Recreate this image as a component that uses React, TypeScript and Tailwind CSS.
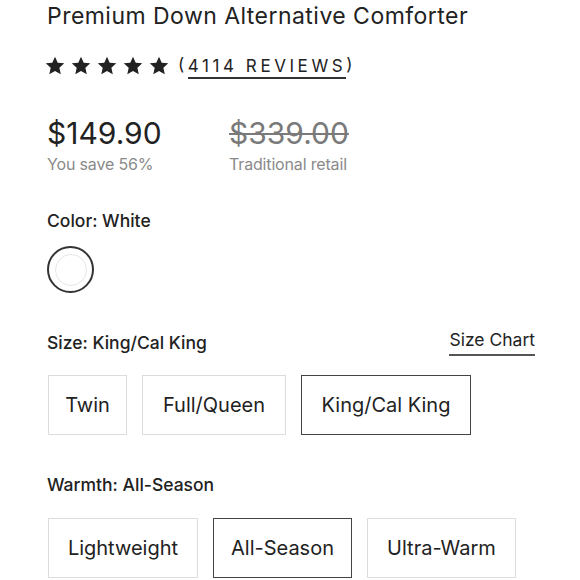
import React from "react";

const Star = () => (
  <svg width="20" height="19" viewBox="0 0 24 23" className="block">
    <path d="M12 0.8l3.3 7.3 7.9 0.8-5.9 5.4 1.7 7.8L12 18.1l-6.9 4 1.7-7.8L0.8 8.9l7.9-0.8z" fill="#222" />
  </svg>
);

const Opt = ({ label, w, selected }: { label: string; w: string; selected?: boolean }) => (
  <div
    className={`h-[60px] ${w} flex items-center justify-center text-[20px] text-[#222] ${
      selected ? "border-[1.5px] border-[#444]" : "border border-[#dcdcdc]"
    }`}
  >
    {label}
  </div>
);

export default function App() {
  return (
    <div className="w-[580px] h-[580px] overflow-hidden bg-white pl-[47px] pr-[45px]" style={{ fontFamily: "Inter, 'Liberation Sans', sans-serif" }}>
      <div className="text-[23px] leading-[28px] tracking-[0.02em] text-[#222] pt-[2px]">Premium Down Alternative Comforter</div>
      <div className="flex items-center mt-[24px] h-[22px]">
        <div className="flex gap-[6px] ml-[-2px]">
          <Star />
          <Star />
          <Star />
          <Star />
          <Star />
        </div>
        <div className="ml-[9px] text-[17px] tracking-[0.21em] text-[#222] flex">
          <span>(</span>
          <span className="border-b-2 border-[#333] leading-[20px] pb-[1px] mt-[4px]">4114 REVIEWS</span>
          <span>)</span>
        </div>
      </div>
      <div className="flex mt-[40px]">
        <div className="w-[182px]">
          <div className="text-[30px] leading-[34px] text-[#222]">$149.90</div>
          <div className="text-[16px] leading-[20px] tracking-[-0.01em] text-[#8a8a8a] mt-[4px]">You save 56%</div>
        </div>
        <div>
          <div className="text-[30px] leading-[34px] text-[#7a7a7a] line-through decoration-[2px]">$339.00</div>
          <div className="text-[16px] leading-[20px] tracking-[-0.01em] text-[#8a8a8a] mt-[4px]">Traditional retail</div>
        </div>
      </div>
      <div className="text-[17.5px] leading-[22px] font-medium text-[#222] mt-[36px]">Color: White</div>
      <div className="mt-[14px] w-[47px] h-[47px] rounded-full border-2 border-[#333] flex items-center justify-center">
        <div className="w-[32px] h-[32px] rounded-full border border-[#e6e6e6] bg-white" />
      </div>
      <div className="flex justify-between items-end mt-[36px]">
        <div className="text-[17.5px] leading-[22px] font-medium text-[#222]">Size: King/Cal King</div>
        <div className="text-[17.5px] leading-[22px] text-[#222] border-b-2 border-[#555] pb-[3px] mb-[-2px]">Size Chart</div>
      </div>
      <div className="flex gap-[15px] mt-[21px] pl-[1px]">
        <Opt label="Twin" w="w-[79px]" />
        <Opt label="Full/Queen" w="w-[144px]" />
        <Opt label="King/Cal King" w="w-[170px]" selected />
      </div>
      <div className="text-[17.5px] leading-[22px] font-medium text-[#222] mt-[39px]">Warmth: All-Season</div>
      <div className="flex gap-[15px] mt-[22px] pl-[1px]">
        <Opt label="Lightweight" w="w-[150px]" />
        <Opt label="All-Season" w="w-[139px]" selected />
        <Opt label="Ultra-Warm" w="w-[149px]" />
      </div>
    </div>
  );
}
